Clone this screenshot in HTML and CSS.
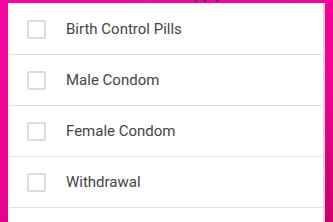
FILE: index.html
```html
<!DOCTYPE html>
<html lang="en">
<head>
    <meta charset="UTF-8">
    <meta name="viewport" content="width=device-width, initial-scale=1.0">
    <title>Contraception</title>
    <link rel="stylesheet" href="styles.css">
</head>
<body>
    <div class="page">
        <h2 class="question">Select all that apply</h2>

        <!-- Liste des options -->
        <ul class="options">
            <li class="option"><span class="box"></span><span class="label">Birth Control Pills</span></li>
            <li class="option"><span class="box"></span><span class="label">Male Condom</span></li>
            <li class="option"><span class="box"></span><span class="label">Female Condom</span></li>
            <li class="option"><span class="box"></span><span class="label">Withdrawal</span></li>
        </ul>
    </div>
</body>
</html>
```

FILE: styles.css
```css
/* Réinitialisation */
body, html {
    margin: 0;
    padding: 0;
    height: 100%;
    font-family: Roboto, "Liberation Sans", sans-serif;
    overflow: hidden;
}

.page {
    height: 100%;
    background: linear-gradient(160deg, #f5079e 0%, #ea0692 55%, #c4006a 100%);
    padding: 0 8px;
    box-sizing: border-box;
    display: flex;
    flex-direction: column;
}

.question {
    margin: -16px 0 0 0;
    height: 19px;
    font-size: 15px;
    font-weight: normal;
    color: #333;
    padding-left: 84px;
    line-height: 20px;
    flex: none;
}

/* Carte blanche */
.options {
    list-style: none;
    margin: 0;
    padding: 0;
    flex: 1;
    background: #fff;
    border-left: 2px solid #e8e8e8;
    border-right: 2px solid #d8d8d8;
    border-top: 1px solid #e8e8e8;
}

.option {
    display: flex;
    align-items: center;
    height: 50px;
    border-bottom: 1px solid #e2e2e2;
}

.box {
    width: 15px;
    height: 15px;
    border: 2px solid #dcdcdc;
    border-radius: 2px;
    margin-left: 17px;
    margin-right: 20px;
}

.label {
    font-size: 15px;
    color: #454545;
}
```
